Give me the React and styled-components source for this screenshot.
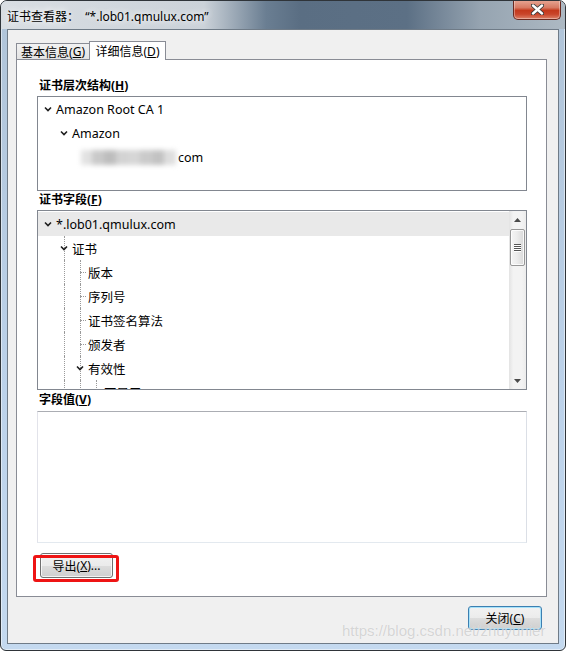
import styled, { createGlobalStyle } from 'styled-components'

const GlobalStyle = createGlobalStyle`
html, body {
  margin: 0;
  padding: 0;
  background: #ffffff;
}
body {
  font-family: "Noto Sans", "Noto Sans CJK SC", sans-serif;
  font-size: 12px;
  color: #000;
}
`

const Window = styled.div`
position: relative;
box-sizing: border-box;
width: 566px;
height: 651px;
display: flex;
flex-direction: column;
border: 1px solid #2f3439;
border-radius: 7px 7px 6px 6px;
overflow: hidden;
background: linear-gradient(to bottom, #b0c4d8 0%, #bcd2ea 60%, #c4d9ef 100%);
box-shadow: inset 0 0 0 1px rgba(255,255,255,0.5);
`

const TitleBar = styled.div`
height: 28px;
flex-shrink: 0;
display: flex;
align-items: flex-start;
justify-content: space-between;
padding-left: 6px;
background: linear-gradient(to right, #d9dee3 0%, #cbd2d9 36%, #6a7e92 47%, #5a6e83 53%, #5c7085 72%, #96a4b1 85%, #adb9c3 100%);
`

const Title = styled.span`
margin-top: 6px;
font-size: 12px;
white-space: pre;
color: #000;
text-shadow: 0 0 6px rgba(255,255,255,0.95), 0 0 10px rgba(255,255,255,0.8);
`

const CloseBox = styled.div`
box-sizing: border-box;
width: 48px;
height: 20px;
margin-right: 4px;
margin-top: -1px;
display: flex;
align-items: center;
justify-content: center;
border: 1px solid #6b2a20;
border-top: none;
border-radius: 0 0 5px 5px;
background: linear-gradient(to bottom, #e8a896 0%, #d77a63 40%, #c4391c 55%, #c9452a 75%, #dc8269 100%);
box-shadow: inset 0 0 0 1px rgba(255,255,255,0.35);
`

const Body = styled.div`
flex: 1;
display: flex;
padding: 0 6px 6px 6px;
`

const Client = styled.div`
flex: 1;
display: flex;
flex-direction: column;
border: 1px solid #6f7b87;
background: #f0f0f0;
padding: 11px 11px 0 8px;
`

const TabStrip = styled.div`
display: flex;
align-items: flex-end;
margin-bottom: -1px;
position: relative;
z-index: 1;
`

const Tab = styled.div`
box-sizing: border-box;
width: ${p => p.$active ? 77 : 73}px;
height: ${p => p.$active ? 19 : 16}px;
margin-bottom: ${p => p.$active ? 0 : 1}px;
display: flex;
align-items: center;
justify-content: center;
border: 1px solid #898c95;
border-bottom: none;
border-right: ${p => p.$active ? '1px solid #898c95' : 'none'};
background: ${p => p.$active ? '#ffffff' : 'linear-gradient(to bottom, #f2f2f2, #e3e3e3)'};
font-size: 12px;
white-space: nowrap;
`

const U = styled.span`
text-decoration: underline;
text-underline-offset: 1px;
`

const Panel = styled.div`
display: flex;
flex-direction: column;
border: 1px solid #898c95;
background: #ffffff;
padding: 18px 19px 18px 20px;
`

const Label = styled.div`
height: 16px;
line-height: 16px;
margin-top: ${p => p.$gap || 0}px;
margin-left: 2px;
font-weight: 700;
font-size: 12px;
white-space: nowrap;
`

const TreeBox = styled.div`
box-sizing: border-box;
height: ${p => p.$h}px;
margin-top: ${p => p.$gap}px;
display: flex;
border: 1px solid #828790;
background: #ffffff;
overflow: hidden;
`

const TreeList = styled.div`
flex: 1;
padding-top: ${p => p.$pad || 0}px;
overflow: hidden;
`

const Row = styled.div`
position: relative;
height: 24px;
display: flex;
align-items: center;
padding-left: ${p => 16 * p.$level}px;
background: ${p => p.$selected ? '#e9e9e9' : 'transparent'};
font-size: 12.5px;
white-space: nowrap;
`

const Twisty = styled.span`
position: relative;
z-index: 1;
box-sizing: border-box;
width: 18px;
flex-shrink: 0;
display: flex;
align-items: center;
padding-left: 6px;
`

const Guide = styled.span`
position: absolute;
top: 0;
bottom: 0;
left: ${p => p.$x}px;
border-left: 1px dotted #9a9a9a;
`

const Stub = styled.span`
position: absolute;
top: 12px;
left: ${p => p.$x}px;
width: 6px;
border-top: 1px dotted #9a9a9a;
`

const Redacted = styled.span`
display: inline-flex;
height: 15px;
margin-left: -7px;
margin-right: 2px;
filter: blur(2.5px);
`

const Smudge = styled.span`
width: ${p => p.$w}px;
background: ${p => p.$c};
`

const ScrollBar = styled.div`
width: 17px;
flex-shrink: 0;
display: flex;
flex-direction: column;
align-items: center;
background: linear-gradient(to right, #e3e3e3 0%, #f3f3f3 25%, #f3f3f3 75%, #ececec 100%);
`

const ArrowButton = styled.div`
width: 17px;
height: 17px;
flex-shrink: 0;
display: flex;
align-items: center;
justify-content: center;
`

const Thumb = styled.div`
box-sizing: border-box;
width: 15px;
height: 37px;
margin-top: 1px;
display: flex;
flex-direction: column;
align-items: center;
justify-content: center;
gap: 1px;
border: 1px solid #979797;
border-radius: 2px;
background: linear-gradient(to right, #f5f5f5 0%, #ececec 45%, #d9d9d9 100%);
box-shadow: inset 0 0 0 1px rgba(255,255,255,0.8);
`

const Grip = styled.span`
width: 7px;
height: 1px;
background: #555;
box-shadow: 0 1px 0 #ffffff;
`

const Track = styled.div`
flex: 1;
`

const ValueBox = styled.div`
box-sizing: border-box;
height: 132px;
margin-top: 3px;
border: 1px solid;
border-color: #abadb3 #dbdfe6 #e3e9ef #e2e3ea;
background: #ffffff;
`

const ButtonRow = styled.div`
display: flex;
margin-top: ${p => p.$gap || 0}px;
justify-content: ${p => p.$end ? 'flex-end' : 'flex-start'};
padding-right: ${p => p.$end ? 5 : 0}px;
`

const ButtonWrap = styled.div`
position: relative;
margin-left: ${p => p.$left || 0}px;
`

const PushButton = styled.button`
box-sizing: border-box;
width: ${p => p.$w}px;
height: ${p => p.$h}px;
padding: 0;
display: flex;
align-items: center;
justify-content: center;
border: 1px solid ${p => p.$default ? '#3c7fb1' : '#707070'};
border-radius: 3px;
background: linear-gradient(to bottom, #f2f2f2 0%, #ebebeb 50%, #dddddd 51%, #cfcfcf 100%);
box-shadow: inset 0 0 0 1px ${p => p.$default ? '#a6e2fa' : 'rgba(255,255,255,0.75)'};
font-family: "Noto Sans", "Noto Sans CJK SC", sans-serif;
font-size: 12px;
color: #000;
`

const RedMark = styled.div`
position: absolute;
left: -7px;
top: 2px;
width: 86px;
height: 27px;
box-sizing: border-box;
border: 3px solid #ee1414;
border-radius: 3px;
pointer-events: none;
`

const Watermark = styled.div`
position: absolute;
left: 341px;
top: 621px;
font-family: "Liberation Sans", Arial, sans-serif;
font-size: 15px;
line-height: 18px;
color: rgba(180,180,180,0.55);
text-shadow: 0 0 1px rgba(255,255,255,0.9);
white-space: nowrap;
pointer-events: none;
`

const Chevron = () => (
  <svg width="8" height="6" viewBox="0 0 8 6">
    <polyline points="1,1.5 4,4.5 7,1.5" fill="none" stroke="#1e1e1e" strokeWidth="1.6" />
  </svg>
)

const TreeRow = ({ level, open, leaf, guides = 0, selected, children }) => {
  const cols = []
  for (let k = 1; k <= guides; k++) cols.push(<Guide key={k} $x={10 + 16 * k} />)
  return (
    <Row $level={level} $selected={selected}>
      {cols}
      {leaf && guides > 0 && <Stub $x={10 + 16 * level} />}
      <Twisty>{open && <Chevron />}</Twisty>
      {children}
    </Row>
  )
}

const smudges = [
  ['#e2e2e2', 11], ['#c9c9c9', 12], ['#bdbdbd', 12], ['#d3d3d3', 12],
  ['#d6d6d6', 12], ['#cacaca', 13], ['#c2c2c2', 11], ['#dedede', 12],
]

export default function App() {
  return (
    <>
      <GlobalStyle />
      <Window>
        <TitleBar>
          <Title>证书查看器：  “*.lob01.qmulux.com”</Title>
          <CloseBox>
            <svg width="13" height="11" viewBox="0 0 13 11">
              <path d="M2 1.5 L11 9.5 M11 1.5 L2 9.5" stroke="#3a3a3a" strokeWidth="4.2" strokeLinecap="round" />
              <path d="M2 1.5 L11 9.5 M11 1.5 L2 9.5" stroke="#ffffff" strokeWidth="2.4" strokeLinecap="round" />
            </svg>
          </CloseBox>
        </TitleBar>
        <Body>
          <Client>
            <TabStrip>
              <Tab>基本信息(<U>G</U>)</Tab>
              <Tab $active>详细信息(<U>D</U>)</Tab>
            </TabStrip>
            <Panel>
              <Label>证书层次结构(<U>H</U>)</Label>
              <TreeBox $h={95} $gap={2}>
                <TreeList>
                  <TreeRow level={0} open>Amazon Root CA 1</TreeRow>
                  <TreeRow level={1} open>Amazon</TreeRow>
                  <TreeRow level={2} leaf>
                    <Redacted>
                      {smudges.map(([c, w], i) => <Smudge key={i} $c={c} $w={w} />)}
                    </Redacted>
                    com
                  </TreeRow>
                </TreeList>
              </TreeBox>

              <Label $gap={1}>证书字段(<U>F</U>)</Label>
              <TreeBox $h={180} $gap={2}>
                <TreeList $pad={1}>
                  <TreeRow level={0} open selected>*.lob01.qmulux.com</TreeRow>
                  <TreeRow level={1} open guides={1}>证书</TreeRow>
                  <TreeRow level={2} leaf guides={2}>版本</TreeRow>
                  <TreeRow level={2} leaf guides={2}>序列号</TreeRow>
                  <TreeRow level={2} leaf guides={2}>证书签名算法</TreeRow>
                  <TreeRow level={2} leaf guides={2}>颁发者</TreeRow>
                  <TreeRow level={2} open guides={2}>有效性</TreeRow>
                  <TreeRow level={3} leaf guides={3}>不早于</TreeRow>
                </TreeList>
                <ScrollBar>
                  <ArrowButton>
                    <svg width="7" height="4" viewBox="0 0 7 4"><polygon points="0,4 3.5,0 7,4" fill="#4a4a4a" /></svg>
                  </ArrowButton>
                  <Thumb>
                    <Grip /><Grip /><Grip /><Grip />
                  </Thumb>
                  <Track />
                  <ArrowButton>
                    <svg width="7" height="4" viewBox="0 0 7 4"><polygon points="0,0 3.5,4 7,0" fill="#4a4a4a" /></svg>
                  </ArrowButton>
                </ScrollBar>
              </TreeBox>

              <Label $gap={2}>字段值(<U>V</U>)</Label>
              <ValueBox />

              <ButtonRow $gap={10}>
                <ButtonWrap $left={3}>
                  <PushButton $w={73} $h={25}>导出(<U>X</U>)...</PushButton>
                  <RedMark />
                </ButtonWrap>
              </ButtonRow>
            </Panel>
            <ButtonRow $gap={9} $end>
              <PushButton $w={74} $h={24} $default>关闭(<U>C</U>)</PushButton>
            </ButtonRow>
          </Client>
        </Body>
        <Watermark>https://blog.csdn.net/zhuyunier</Watermark>
      </Window>
    </>
  )
}
